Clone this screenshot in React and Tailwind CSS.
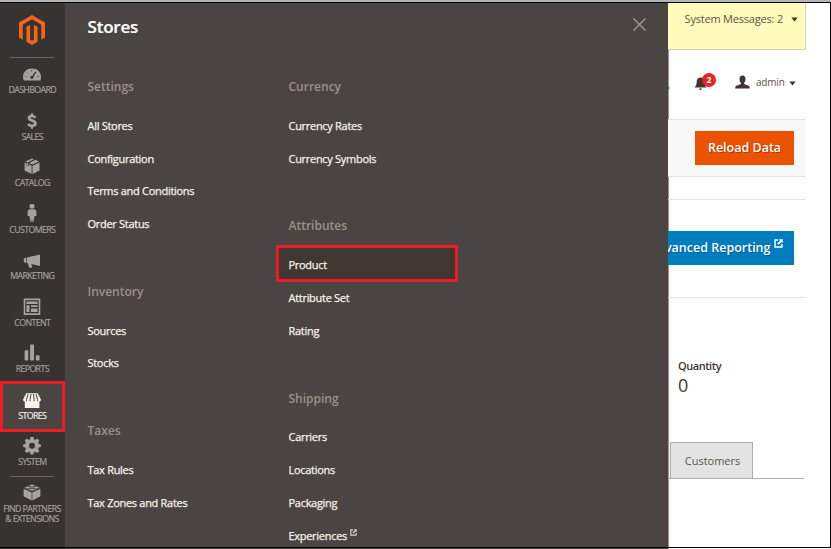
const Icon = ({ children, w = 18, h = 18, box }) => (
  <svg width={w} height={h} viewBox={box || `0 0 ${w} ${h}`} fill="currentColor" className="block shrink-0">
    {children}
  </svg>
);

const Gauge = () => (
  <Icon>
    <path d="M.9 15.500A9 9 0 0 1 0 12C0 7 4 3.600 9 3.600s9 3.400 9 8.400a9 9 0 0 1-.6 3.500z" />
    <g stroke="#373330" fill="none">
      <path d="M9 12.600 12.800 6.800" strokeWidth="1.300" />
      <path d="M2.300 11.500h1.200M4.200 7.600l.9.900M8.700 5v1.400M14.300 11.500h1.400" strokeWidth="0.800" />
    </g>
    <circle cx="8.800" cy="12.300" r="1.500" fill="#373330" />
  </Icon>
);
const Dollar = () => (
  <Icon>
    <path d="M12.300 5.900C11.700 4.500 10.400 4 9 4c-1.900 0-3 .8-3 2.100 0 3.200 6.500 1.800 6.500 5.200 0 1.600-1.500 2.500-3.500 2.500-1.900 0-3.100-.7-3.600-2.100" fill="none" stroke="currentColor" strokeWidth="2.700" />
    <path d="M8 1.200h2v3H8zM8 13.800h2v3H8z" />
  </Icon>
);
const Box = () => (
  <Icon>
    <g transform="translate(0 -.8)">
      <path d="M9 1.300 11 2.100 4.400 5.300 2.300 4.300zM12.300 2.600 16 4.300 9.200 7.400 6 6zM1.600 5.300 8.600 8.600v8.300L1.600 13.400zM16.500 5.300v8.100l-7 3.500V8.600z" />
      <path d="M3.600 5.200 5.400 6.100v3l-1.800-.9z" fill="#373330" />
      <path d="M4 5.300 5 5.800v2.500l-1-.5z" />
    </g>
  </Icon>
);
const Person = () => (
  <Icon h={20} w={18}>
    <g transform="translate(0 -1.500)">
      <circle cx="9" cy="3.800" r="2.500" />
      <path d="M7 6.800h4c1.500 0 2.400.9 2.400 2.300v4.400h-1.800l-1.200 5.700H9.300L9 14.500l-.3 4.700H7.600l-1.200-5.700H4.600V9.100c0-1.400.9-2.300 2.400-2.300z" />
    </g>
  </Icon>
);
const Horn = () => (
  <Icon>
    <path d="M.8 7.200 3.200 6.700v5.200L.8 11.200zM3.800 6.600 17 3.600v11.500L8.300 13l1 3.200-3.100.7-1.300-4.600-1.100-.2z" />
  </Icon>
);
const Layout = () => (
  <Icon>
    <g transform="translate(0 -.3)">
      <path fillRule="evenodd" d="M.7.800h16.600v16.400H.7zM2.300 2.500v13.100h13.400V2.500z" />
      <path d="M3.500 3.800h11v2.400h-11zM3.500 7.500h3v6.900h-3zM8 7.500h6.500v1.900H8zM8 10.700h6.500v3.700H8z" />
    </g>
  </Icon>
);
const Bars = () => (
  <Icon>
    <rect x="1.600" y="6.200" width="3.700" height="10.300" rx=".8" />
    <rect x="7.100" y=".6" width="3.900" height="15.900" rx=".8" />
    <rect x="12.800" y="11.300" width="3.800" height="5.200" rx=".8" />
  </Icon>
);
const Shop = () => (
  <Icon>
    <path d="M3.300 2.300h11.400L18 8.500c0 1.300-.7 2-1.600 2v6.600H1.800v-6.600C.8 10.500 0 9.800 0 8.500z" />
    <path d="M5.200 3 3.500 8.700v1.500M8 3l-.9 5.700v1.500M10.500 3l.6 5.700v1.500M13 3l1.600 5.700v1.500" fill="none" stroke="#4a4542" strokeWidth="1" />
  </Icon>
);
const Gear = () => (
  <Icon>
    <path fillRule="evenodd" transform="translate(0 -.5)" d="M7.500.6h3l.4 2.200 1.500.6 1.900-1.300 2 2-1.200 1.900.6 1.500 2.200.4v2.700l-2.200.4-.6 1.500 1.200 1.900-2 2-1.900-1.200-1.500.6-.4 2.200h-3l-.4-2.200-1.500-.6-1.900 1.200-2-2 1.200-1.900-.6-1.500-2.200-.4V7.900l2.200-.4.600-1.500-1.200-1.900 2-2 1.900 1.300 1.500-.6zM9 6.300a3 3 0 1 0 0 6 3 3 0 0 0 0-6z" />
  </Icon>
);
const Brick = () => (
  <Icon>
    <path d="M.6 5.700 8.700 9.500v8L.6 13.300zM17.400 5.700v7.600l-8.100 4.200v-8z" />
    <path d="M9 .9 17 4.800 9 8.600 1 4.800z" />
    <g fill="#a6a29d" stroke="#373330" strokeWidth=".7">
      <ellipse cx="9" cy="2.600" rx="2.500" ry="1.300" />
      <ellipse cx="4.800" cy="4.500" rx="2.500" ry="1.300" />
      <ellipse cx="13.200" cy="4.500" rx="2.500" ry="1.300" />
      <ellipse cx="9" cy="6.600" rx="2.500" ry="1.300" />
    </g>
  </Icon>
);
const External = ({ size }) => (
  <Icon w={size} h={size} box="0 0 10 10">
    <path d="M4.500 1.200H1.200v7.600h7.600V5.600" fill="none" stroke="currentColor" strokeWidth="1.600" />
    <path d="M5.400.3h4.300v4.300L8.300 3.200 5 6.500 3.600 5.100l3.300-3.300z" />
  </Icon>
);
const Caret = () => (
  <svg width="7" height="5" viewBox="0 0 7 5" className="block"><path d="M.3.500h6.400L3.500 4.500z" fill="#41362f" /></svg>
);

const nav = [
  ["DASHBOARD", Gauge],
  ["SALES", Dollar],
  ["CATALOG", Box],
  ["CUSTOMERS", Person],
  ["MARKETING", Horn],
  ["CONTENT", Layout],
  ["REPORTS", Bars],
  ["STORES", Shop],
  ["SYSTEM", Gear],
];

const columns = [
  [
    ["Settings", ["All Stores", "Configuration", "Terms and Conditions", "Order Status"]],
    ["Inventory", ["Sources", "Stocks"]],
    ["Taxes", ["Tax Rules", "Tax Zones and Rates"]],
  ],
  [
    ["Currency", ["Currency Rates", "Currency Symbols"]],
    ["Attributes", ["Product", "Attribute Set", "Rating"]],
    ["Shipping", ["Carriers", "Locations", "Packaging", "Experiences"]],
  ],
];

function Sidebar() {
  return (
    <nav className="flex w-[65px] shrink-0 flex-col bg-[#373330] text-[#a6a29d]">
      <div className="flex h-[54px] items-center justify-center pr-px pb-[1px] text-[#f26322]">
        <Icon w={30} h={30} box="0 0 24 24">
          <path d="M12 24l-4.455-2.572v-12l2.970-1.715v12.001l1.485.902 1.485-.902V7.713l2.971 1.715v12L12 24zM22.391 6v12l-2.969 1.714V7.713L12 3.430 4.574 7.713v12.001L1.609 18V6L12 0l10.391 6z" />
        </Icon>
      </div>
      <div className="mr-[11px] ml-[10px] h-px shrink-0 bg-[#736963]" />
      {nav.map(([label, Glyph]) => {
        const on = label === "STORES";
        return (
          <div key={label} className={`relative flex h-[46.5px] shrink-0 flex-col items-center pr-px ${on ? "bg-[#4a4542] text-[#f7f3eb]" : ""}`}>
            <div className="flex h-[25px] items-end pt-[7px]">
              <div className="flex h-[18px] items-center"><Glyph /></div>
            </div>
            <span className="mt-[1px] pl-[0.500px] text-[8.800px] leading-[12px] tracking-[-0.62px] whitespace-nowrap [-webkit-text-stroke:0.15px]">{label}</span>
            {on && <div className="absolute -top-[3px] left-0 h-[51px] w-[65px] border-[3px] border-[#ed1c24]" />}
          </div>
        );
      })}
      <div className="-mt-px mr-[11px] ml-[10px] h-px shrink-0 bg-[#736963]" />
      <div className="flex flex-col items-center pt-[6px] pr-px">
        <Brick />
        <span className="mt-[3px] flex flex-col items-center text-[8.800px] leading-[10.200px] tracking-[-0.58px] whitespace-nowrap [-webkit-text-stroke:0.15px]">
          <span>FIND PARTNERS</span>
          <span>&amp; EXTENSIONS</span>
        </span>
      </div>
    </nav>
  );
}

function Flyout() {
  return (
    <section className="flex w-[603px] shrink-0 flex-col bg-[#4a4542]">
      <header className="flex h-[72px] shrink-0 items-start justify-between pt-[12px] pr-[22px] pl-[22.500px]">
        <h1 className="text-[17px] leading-[24px] font-semibold tracking-[-0.2px] text-white [-webkit-text-stroke:0.2px]">Stores</h1>
        <svg width="13" height="13" viewBox="0 0 13 13" className="mt-[3px]">
          <path d="M.5.5l12 12M12.500.5l-12 12" stroke="#a79d95" strokeWidth="1.300" />
        </svg>
      </header>
      <div className="flex h-[474px] pl-[22.500px]">
        {columns.map((groups, i) => (
          <div key={i} className="flex w-[201px] flex-col gap-[39.2px]">
            {groups.map(([title, links]) => (
              <div key={title} className="shrink-0">
                <h2 className="mb-[11.7px] h-[23px] text-[12px] leading-[23px] font-semibold text-[#9b9189]">{title}</h2>
                {links.map((link) => (
                  <div key={link} className="relative flex h-[32.75px] items-center">
                    {link === "Product" && (
                      <div className="absolute -top-[4px] -left-[12.500px] h-[37px] w-[182px] border-[3px] border-[#ed1c24] bg-[#413731]" />
                    )}
                    <a className="relative text-[11px] tracking-[-0.29px] text-[#f7f3eb] [-webkit-text-stroke:0.25px]">{link}</a>
                    {link === "Experiences" && (
                      <span className="mb-[6px] ml-[3px] text-[#d8d4cf]"><External size={7} /></span>
                    )}
                  </div>
                ))}
              </div>
            ))}
          </div>
        ))}
      </div>
    </section>
  );
}

function Dashboard() {
  return (
    <main className="flex min-w-0 flex-1 flex-col overflow-hidden bg-white text-[#41362f] shadow-[inset_2px_0_1px_-1px_#8f8b88]">
      <div className="mr-[25px] flex h-[47px] shrink-0 items-start justify-end gap-[8px] border-r border-b border-[#d1cfb8] bg-[#fffbbb] pr-[7px]">
        <span className="mt-[8px] text-[11px] leading-[15px] tracking-[-0.200px] whitespace-nowrap text-[#5c534d]">System Messages: 2</span>
        <span className="mt-[14px]"><Caret /></span>
      </div>
      <div className="flex h-[69px] shrink-0 items-center pb-[4px]">
        <span className="mt-[11px] h-[2px] w-px bg-[#006bb4]" />
        <div className="relative ml-[25px] h-[18px] w-[22px]">
          <svg width="13" height="14" viewBox="0 0 13 14" className="mt-[3px]">
            <path d="M6.500.5c2.600 0 3.800 1.700 3.800 4.300 0 2.700.7 4 2.200 5.700H.5C2 8.800 2.700 7.500 2.700 4.800 2.700 2.200 3.900.5 6.500.5zM5 11.500h3c0 .8-.6 1.400-1.500 1.400S5 12.300 5 11.500z" fill="#41362f" />
          </svg>
          <span className="absolute -top-[1px] left-[8px] flex h-[14px] w-[14px] items-center justify-center rounded-full bg-[#e22626] text-[8px] font-bold text-white">2</span>
        </div>
        <svg width="15" height="14" viewBox="0 0 15 14" className="-mt-[2px] ml-[19px]">
          <path d="M7.500.5c2 0 3 1.400 3 3.400 0 1.800-.6 3-1.400 3.900v1.300l4.400 1.600c.8.3 1.300 1 1.300 2.800H.2c0-1.800.5-2.500 1.300-2.800l4.400-1.600V7.800C5.100 6.900 4.500 5.700 4.500 3.900c0-2 1-3.400 3-3.400z" fill="#41362f" />
        </svg>
        <span className="ml-[6px] text-[10px] tracking-[-0.2px] text-[#5c534d]">admin</span>
        <span className="mt-[2px] ml-[4px]"><Caret /></span>
      </div>
      <div className="mr-[25px] flex h-[58px] shrink-0 items-center justify-end border-y border-[#e3e3e3] bg-[#f8f8f8] pr-[12px]">
        <button className="h-[34px] w-[99px] bg-[#eb5202] text-[12.5px] font-semibold whitespace-nowrap text-white [text-shadow:1px_1px_0_rgba(0,0,0,.25)]">Reload Data</button>
      </div>
      <div className="mt-[22px] mr-[25px] flex h-[99px] shrink-0 items-center justify-end border-y border-[#e3e3e3] pr-[12px] pb-px">
        <button className="flex h-[34px] w-[165px] shrink-0 items-center justify-end gap-[3px] bg-[#007dbd] pr-[11.500px] text-[12.5px] font-semibold whitespace-nowrap text-white [text-shadow:1px_1px_0_rgba(0,0,0,.25)]">
          Advanced Reporting
          <span className="mb-[9px]"><External size={9} /></span>
        </button>
      </div>
      <div className="mt-[60px] ml-[10px] flex shrink-0 flex-col">
        <span className="text-[11px] leading-[16px] font-semibold tracking-[-0.45px]">Quantity</span>
        <span className="text-[18px] leading-[23px]">0</span>
      </div>
      <div className="mt-[45px] mr-[27px] flex h-[37px] shrink-0 border-b border-[#adadad] pl-[2px]">
        <div className="flex w-[83px] items-center justify-center border border-b-0 border-[#adadad] bg-[#e3e3e3] pt-px pl-[2px] text-[11px] text-[#5c534d]">Customers</div>
      </div>
    </main>
  );
}

export default function App() {
  return (
    <div className="relative h-[549px] w-[831px] overflow-hidden bg-white font-['Open_Sans',sans-serif]">
      <div className="h-[2px] bg-[#b5b5b5]" />
      <div className="h-px bg-black" />
      <div className="flex h-[546px]">
        <Sidebar />
        <Flyout />
        <Dashboard />
      </div>
      <div className="absolute top-[2px] right-0 h-[546px] w-px bg-black" />
      <div className="absolute top-[547px] left-0 h-px w-full bg-black" />
    </div>
  );
}
